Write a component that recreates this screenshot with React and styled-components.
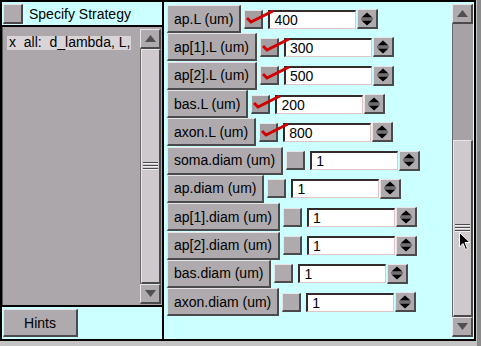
import React from "react";
import styled, { createGlobalStyle } from "styled-components";

const rows = [
    { label: "ap.L (um)", checked: true, value: "400" },
    { label: "ap[1].L (um)", checked: true, value: "300" },
    { label: "ap[2].L (um)", checked: true, value: "500" },
    { label: "bas.L (um)", checked: true, value: "200" },
    { label: "axon.L (um)", checked: true, value: "800" },
    { label: "soma.diam (um)", checked: false, value: "1" },
    { label: "ap.diam (um)", checked: false, value: "1" },
    { label: "ap[1].diam (um)", checked: false, value: "1" },
    { label: "ap[2].diam (um)", checked: false, value: "1" },
    { label: "bas.diam (um)", checked: false, value: "1" },
    { label: "axon.diam (um)", checked: false, value: "1" },
];

const raised = `
    box-sizing: border-box;
    border-style: solid;
    border-width: 1px 2px 2px 1px;
    border-color: #e6e6e6 #4a4a4a #4a4a4a #e6e6e6;
`;

const ArrowIcon = ({ down }) => (
    <svg width="11" height="9" viewBox="0 0 11 9">
        <polygon points={down ? "0,1 11,1 5.5,8" : "5.5,1 11,8 0,8"} fill="#505050" />
    </svg>
);

const SpinIcon = () => (
    <svg width="12" height="14" viewBox="0 0 12 14">
        <polygon points="6,0.5 11.5,5.5 0.5,5.5" fill="#000" />
        <rect x="0" y="6.5" width="12" height="1" fill="#333" />
        <polygon points="0.5,8.5 11.5,8.5 6,13.5" fill="#000" />
    </svg>
);

const CheckMark = () => (
    <CheckSvg width="28" height="16" viewBox="0 0 28 16">
        <path d="M1 8 L5 12 L27 1" fill="none" stroke="#d00000" strokeWidth="3" strokeLinejoin="miter" />
    </CheckSvg>
);

const App = () => {
    return (
        <Page>
            <GlobalStyle />
            <Window>
                <LeftPanel>
                    <Header>
                        <Toggle />
                        <span>Specify Strategy</span>
                    </Header>
                    <ListArea>
                        <ListColumn>
                            <ListItem>{"x  all:  d_lambda, L,"}</ListItem>
                        </ListColumn>
                        <ScrollBar>
                            <ArrowButton><ArrowIcon /></ArrowButton>
                            <Track>
                                <Thumb grow>
                                    <Grip />
                                </Thumb>
                            </Track>
                            <ArrowButton><ArrowIcon down /></ArrowButton>
                        </ScrollBar>
                    </ListArea>
                    <Footer>
                        <HintsButton>Hints</HintsButton>
                    </Footer>
                </LeftPanel>
                <RightPanel>
                    <Rows>
                        {rows.map((r) => (
                            <Row key={r.label}>
                                <LabelButton>{r.label}</LabelButton>
                                <Box checked={r.checked}>{r.checked && <CheckMark />}</Box>
                                <Field>{r.value}</Field>
                                <Spinner><SpinIcon /></Spinner>
                            </Row>
                        ))}
                    </Rows>
                    <ScrollBar right>
                        <ArrowButton><ArrowIcon /></ArrowButton>
                        <Track>
                            <Thumb style={{ height: 177 }}>
                                <Grip />
                            </Thumb>
                        </Track>
                        <ArrowButton><ArrowIcon down /></ArrowButton>
                    </ScrollBar>
                </RightPanel>
            </Window>
            <Cursor width="12" height="19" viewBox="0 0 12 19">
                <path d="M0.5 0.5 L0.5 15 L4 11.5 L6.5 17.5 L8.5 16.5 L6 10.5 L11 10.5 Z" fill="#000" stroke="#fff" strokeWidth="1" />
            </Cursor>
        </Page>
    );
};

const GlobalStyle = createGlobalStyle`
    html, body {
        margin: 0;
        padding: 0;
        background: #c4c4c4;
    }
    body {
        font-family: "Liberation Sans", Arial, sans-serif;
        font-size: 14px;
        color: #000;
    }
`;

const Page = styled.div`
    position: relative;
    width: 481px;
    height: 346px;
    background: linear-gradient(to right, transparent 477px, #8a8a8a 477px);
`;

const Window = styled.div`
    box-sizing: border-box;
    width: 476px;
    height: 341px;
    border: 2px solid #000;
    display: flex;
    background: #ccffff;
`;

const LeftPanel = styled.div`
    box-sizing: border-box;
    width: 162px;
    border-right: 2px solid #000;
    display: flex;
    flex-direction: column;
`;

const Header = styled.div`
    box-sizing: border-box;
    height: 25px;
    border-bottom: 2px solid #000;
    display: flex;
    align-items: center;
    gap: 6px;
    padding-left: 1px;
    background: #ccffff;
`;

const Toggle = styled.div`
    ${raised}
    width: 20px;
    height: 20px;
    background: #aeaaae;
`;

const ListArea = styled.div`
    flex: 1;
    display: flex;
    background: #aba7ab;
    border-left: 1px solid #5a5a5a;
`;

const ListColumn = styled.div`
    flex: 1;
    padding: 9px 0 0 4px;
`;

const ListItem = styled.div`
    width: 124px;
    height: 14px;
    line-height: 13px;
    padding-left: 2px;
    box-sizing: border-box;
    background: #d8d4d8;
    white-space: pre;
`;

const ScrollBar = styled.div`
    width: 21px;
    display: flex;
    flex-direction: column;
    margin: ${(p) => (p.right ? "2px 1px 2px 0" : "2px 1px 1px 0")};
`;

const ArrowButton = styled.div`
    ${raised}
    height: 20px;
    background: #aeaaae;
    display: flex;
    align-items: center;
    justify-content: center;
`;

const Track = styled.div`
    flex: 1;
    display: flex;
    flex-direction: column;
    justify-content: flex-end;
    background: #a6a2a6;
    border-left: 1px solid #6a6a6a;
`;

const Thumb = styled.div`
    ${raised}
    ${(p) => (p.grow ? "flex: 1;" : "")}
    background: #cdc9cd;
    display: flex;
    align-items: center;
    justify-content: center;
`;

const Grip = styled.div`
    width: 15px;
    height: 8px;
    background: repeating-linear-gradient(
        to bottom,
        #4a4a4a 0 1px,
        #f0f0f0 1px 2px,
        transparent 2px 3px
    );
`;

const Footer = styled.div`
    box-sizing: border-box;
    height: 34px;
    border-top: 2px solid #000;
    padding: 2px 0 0 1px;
    background: #ccffff;
`;

const HintsButton = styled.div`
    ${raised}
    width: 75px;
    height: 28px;
    background: #aeaaae;
    display: flex;
    align-items: center;
    justify-content: center;
`;

const RightPanel = styled.div`
    flex: 1;
    display: flex;
    justify-content: space-between;
    overflow: hidden;
    background: #ccffff;
`;

const Rows = styled.div`
    padding: 3px 0 0 3px;
    display: grid;
    grid-auto-rows: 28.3px;
    align-content: start;
`;

const Row = styled.div`
    display: flex;
    align-items: center;
`;

const LabelButton = styled.div`
    ${raised}
    height: 28px;
    padding: 0 6px;
    background: #aeaaae;
    display: flex;
    align-items: center;
    white-space: nowrap;
`;

const Box = styled.div`
    ${raised}
    position: relative;
    width: 19px;
    height: 19px;
    margin: 0 5px 0 3px;
    background: ${(p) => (p.checked ? "#a29ea2" : "#aeaaae")};
`;

const CheckSvg = styled.svg`
    position: absolute;
    left: 1px;
    top: -1px;
`;

const Field = styled.div`
    box-sizing: border-box;
    width: 88px;
    height: 19px;
    border-style: solid;
    border-width: 2px 1px 1px 2px;
    border-color: #352a2a #e2c4c4 #e2c4c4 #352a2a;
    background: #fff;
    line-height: 16px;
    padding-left: 4px;
`;

const Spinner = styled.div`
    ${raised}
    width: 21px;
    height: 20px;
    margin-left: 1px;
    background: #aeaaae;
    display: flex;
    align-items: center;
    justify-content: center;
`;

const Cursor = styled.svg`
    position: absolute;
    left: 459px;
    top: 232px;
`;

export default App;
